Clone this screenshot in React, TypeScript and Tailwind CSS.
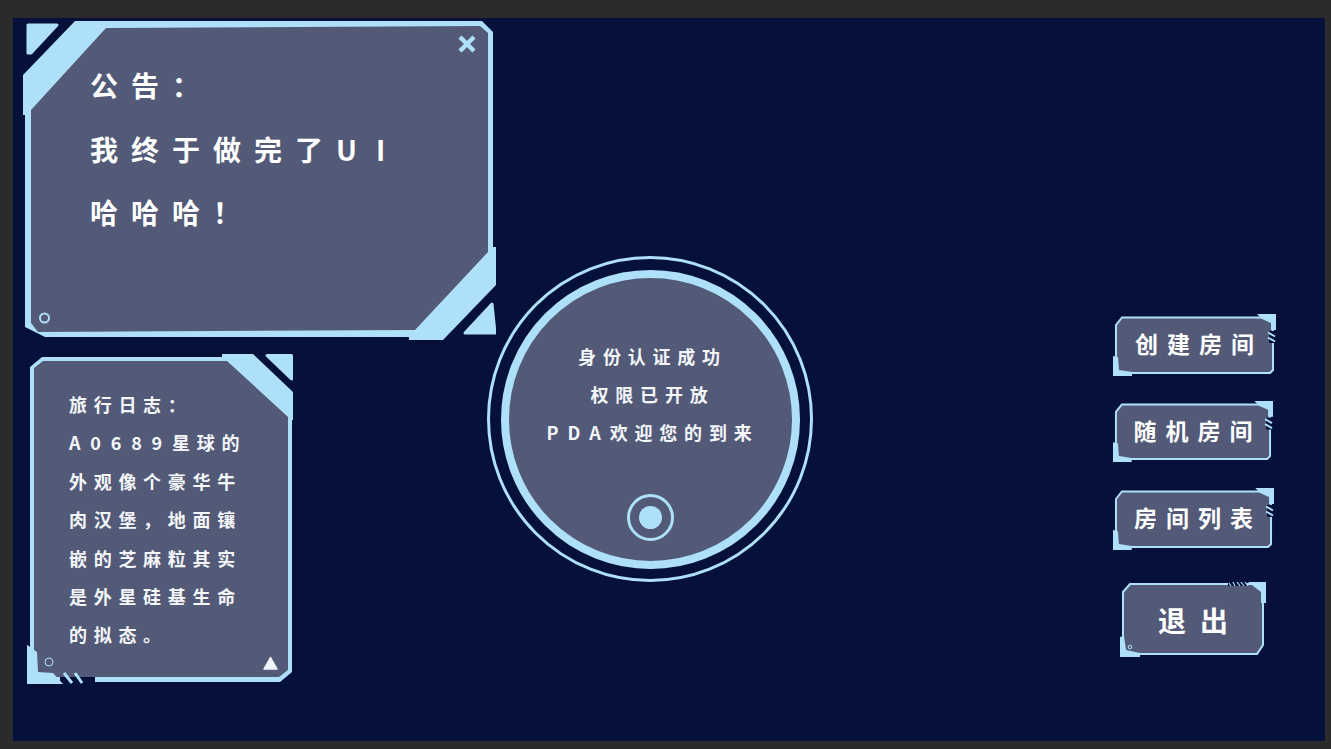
import React from 'react';

const LIGHT = '#aee0fa';
const FILL = '#525a78';

const cjk = { fontFamily: '"Noto Sans CJK SC", "Noto Sans", sans-serif' };

const NoticeFrame: React.FC = () => (
  <svg className="absolute inset-0 w-full h-full" viewBox="22 20 474 320">
    <polygon fill={LIGHT} points="75,21 482,21 493,32 493,247 496,247 496,285 443,340 409,340 409,337 45,337 25,327 25,115 23,115 23,75" />
    <polygon fill={FILL} points="106,28 480,26 488,33 488,252 415,330 38,332 31,323 31,110" />
    <polygon fill={LIGHT} stroke={LIGHT} strokeWidth="3" strokeLinejoin="round" points="28,25 57,25 31,53 28,53" />
    <polygon fill={LIGHT} stroke={LIGHT} strokeWidth="3" strokeLinejoin="round" points="492,304 495,333 465,333" />
    <path d="M460 37 L474 51 M474 37 L460 51" stroke={LIGHT} strokeWidth="4.5" />
    <circle cx="44.5" cy="318" r="4.5" fill="none" stroke={LIGHT} strokeWidth="2" />
  </svg>
);

const LogFrame: React.FC = () => (
  <svg className="absolute inset-0 w-full h-full" viewBox="26 352 268 334">
    <polygon fill={LIGHT} points="30,367 42,357 222,357 222,354 253,354 293,392 293,420 292,420 292,672 280,682 95,682 95,677 60,677 60,684 27,684 27,645 30,647" />
    <polygon fill={FILL} points="34,368 43,361 227,361 288,417 288,670 279,677 38,677 34,670" />
    <polygon fill={LIGHT} points="27,645 37,652 38,672 53,673 63,684 27,684" />
    <rect x="63" y="677" width="32" height="8" fill="#05113b" />
    <polygon fill={LIGHT} stroke={LIGHT} strokeWidth="3" strokeLinejoin="round" points="267,355.5 291.5,355.5 291.5,379" />
    <path d="M64 673 L72 683 M75 673 L82 683" stroke={LIGHT} strokeWidth="3" />
    <circle cx="49" cy="662" r="4" fill="none" stroke={LIGHT} strokeWidth="1" />
    <polygon fill="#f2f6fb" stroke="#f2f6fb" strokeWidth="1.5" strokeLinejoin="round" points="270.5,657.5 264,669 277,669" />
  </svg>
);

const RoomButton: React.FC<{ label: string; className: string }> = ({ label, className }) => (
  <div className={`relative flex items-center justify-center ${className}`}>
    <svg className="absolute inset-0 w-full h-full" viewBox="0 0 163 62" preserveAspectRatio="none">
      <polygon fill={FILL} stroke={LIGHT} strokeWidth="2" points="3,11 9,3.5 150,3.5 160,3.5 160,56 157,59 3,59" />
      <polygon fill={LIGHT} points="144,0 163,0 163,16 158,16 158,9 149,5" />
      <polygon fill={LIGHT} points="0,42 5,43 6,56 19,58 19,62 0,62" />
      <rect x="156" y="17" width="7" height="12" fill="#05113b" />
      <path d="M155 18.5 L162 22.5 M155 23.5 L162 27.5" stroke={LIGHT} strokeWidth="2" />
    </svg>
    <span className="relative text-white font-bold text-[23px] tracking-[9px] pl-[9px] pb-[3px]" style={cjk}>{label}</span>
  </div>
);

const ExitButton: React.FC = () => (
  <div className="relative flex items-center justify-center w-[146px] h-[75px] ml-[7px] mt-[32px]">
    <svg className="absolute inset-0 w-full h-full" viewBox="1120 582 146 75">
      <polygon fill={FILL} stroke={LIGHT} strokeWidth="2" points="1123,592 1130,584 1263,584 1263,645 1257,654 1123,654" />
      <polygon fill={LIGHT} points="1248,582 1266,582 1266,603 1261,603 1261,592" />
      <polygon fill={LIGHT} points="1120,637 1124,636 1126,650 1140,653 1140,657 1120,657" />
      <rect x="1228" y="581" width="19" height="5" fill="#05113b" />
      <path d="M1229 583 L1231 586 M1233 582 L1235 586 M1237 582 L1240 586 M1241 582 L1244 586 M1245 582 L1248 586" stroke={LIGHT} strokeWidth="1.2" />
      <circle cx="1130" cy="647" r="1.8" fill="none" stroke={LIGHT} strokeWidth="1" />
    </svg>
    <span className="relative text-white font-bold text-[28px] tracking-[14px] pl-[14px]" style={cjk}>退出</span>
  </div>
);

export default function App() {
  return (
    <div className="h-screen w-full overflow-hidden bg-[#2b2b2b] pt-[18px] pl-[13px] pr-[6px] pb-[8px]" style={cjk}>
      <div className="h-full bg-[#05113b] flex items-start">
        {/* left column */}
        <div className="ml-[9px] mt-[2px] w-[474px] shrink-0">
          <div className="relative w-[474px] h-[320px]">
            <NoticeFrame />
            <div className="relative pl-[68px] pt-[34px] text-white font-bold text-[28px] leading-[63.5px] tracking-[13px]">
              <div>公告：</div>
              <div>我终于做完了<span className="tracking-[19px]">UI</span></div>
              <div>哈哈哈！</div>
            </div>
          </div>
          <div className="relative w-[268px] h-[334px] ml-[4px] mt-[12px]">
            <LogFrame />
            <div className="relative pl-[43px] pt-[33px] text-[#f4f6fa] font-bold text-[18px] leading-[38.4px] tracking-[6.7px]">
              <div>旅行日志：</div>
              <div><span className="tracking-[9.8px]">A0689</span>星球的</div>
              <div>外观像个豪华牛</div>
              <div>肉汉堡，地面镶</div>
              <div>嵌的芝麻粒其实</div>
              <div>是外星硅基生命</div>
              <div>的拟态。</div>
            </div>
          </div>
        </div>

        {/* center badge */}
        <div className="-ml-[9px] mt-[238px] w-[326px] h-[326px] shrink-0 rounded-full border-[3px] border-[#aee0fa] flex items-center justify-center">
          <div className="w-[299px] h-[299px] rounded-full border-8 border-[#aee0fa] bg-[#525a78] flex flex-col items-center pt-[59px]">
            <div className="text-[#f4f6fa] font-bold text-[18px] leading-[38px] tracking-[6.8px] pl-[5px] text-center">
              <div>身份认证成功</div>
              <div>权限已开放</div>
              <div><span className="tracking-[9px]">PDA</span>欢迎您的到来</div>
            </div>
            <div className="mt-[43px] w-[47px] h-[47px] rounded-full border-[3px] border-[#aee0fa] flex items-center justify-center">
              <div className="w-[23px] h-[23px] rounded-full bg-[#aee0fa]" />
            </div>
          </div>
        </div>

        {/* right column */}
        <div className="ml-auto mr-[49px] mt-[296px] w-[163px] shrink-0 flex flex-col items-start">
          <RoomButton label="创建房间" className="w-[163px] h-[62px]" />
          <RoomButton label="随机房间" className="w-[160px] h-[61px] mt-[25px]" />
          <RoomButton label="房间列表" className="w-[161px] h-[62px] mt-[26px]" />
          <ExitButton />
        </div>
      </div>
    </div>
  );
}
